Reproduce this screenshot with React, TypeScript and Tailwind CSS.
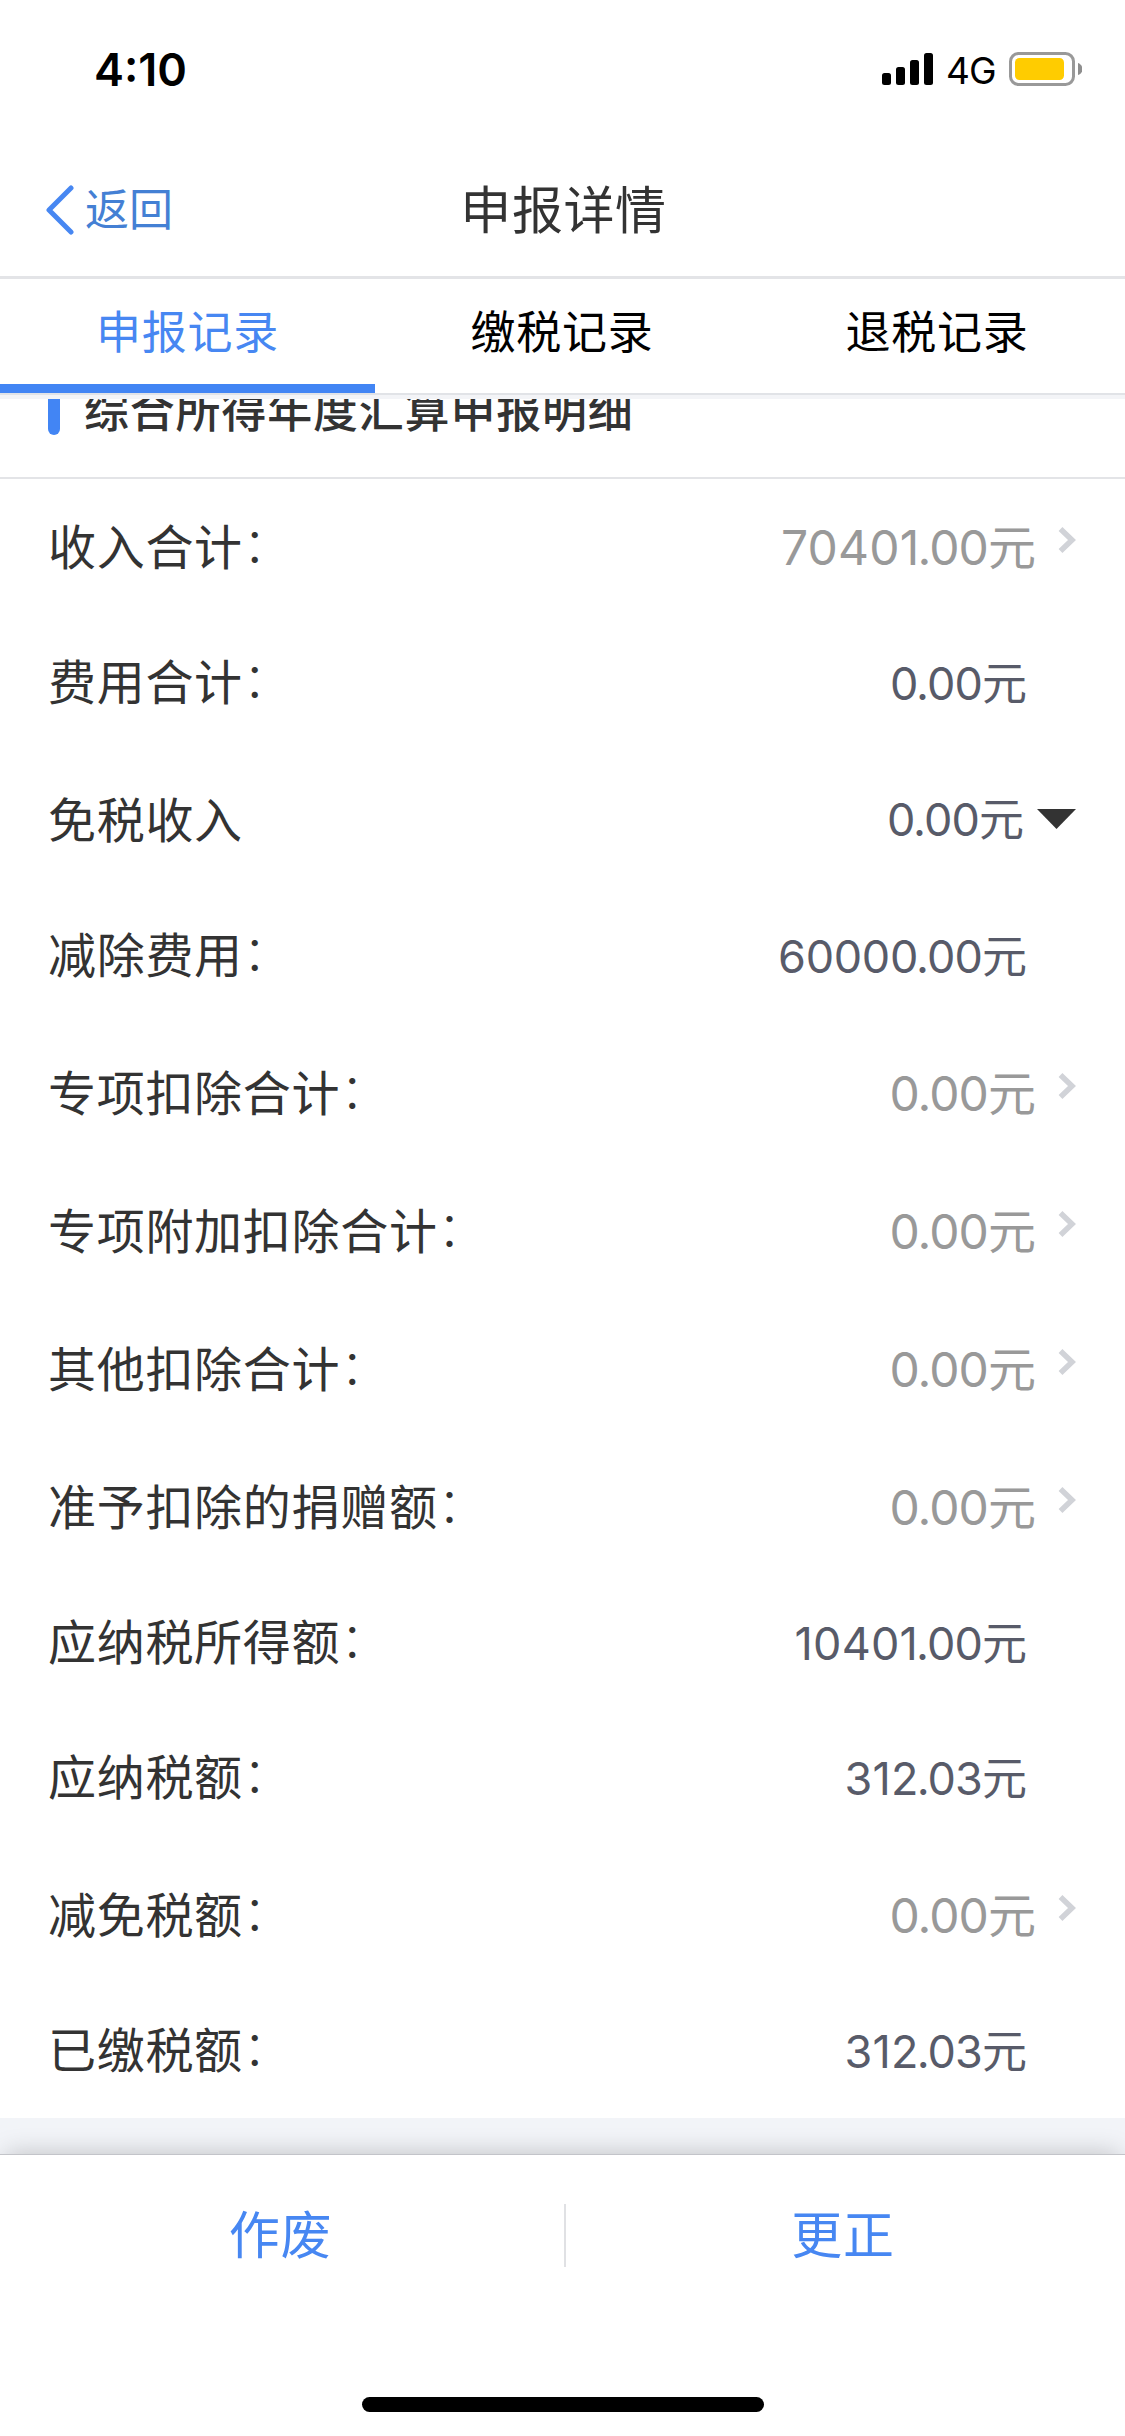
import { useState } from "react";

type Row = {
  label: string;
  colon?: boolean;
  value: string;
  kind: "link" | "plain" | "toggle";
};

const tabs = ["申报记录", "缴税记录", "退税记录"];

const rows: Row[] = [
  { label: "收入合计", colon: true, value: "70401.00", kind: "link" },
  { label: "费用合计", colon: true, value: "0.00", kind: "plain" },
  { label: "免税收入", value: "0.00", kind: "toggle" },
  { label: "减除费用", colon: true, value: "60000.00", kind: "plain" },
  { label: "专项扣除合计", colon: true, value: "0.00", kind: "link" },
  { label: "专项附加扣除合计", colon: true, value: "0.00", kind: "link" },
  { label: "其他扣除合计", colon: true, value: "0.00", kind: "link" },
  { label: "准予扣除的捐赠额", colon: true, value: "0.00", kind: "link" },
  { label: "应纳税所得额", colon: true, value: "10401.00", kind: "plain" },
  { label: "应纳税额", colon: true, value: "312.03", kind: "plain" },
  { label: "减免税额", colon: true, value: "0.00", kind: "link" },
  { label: "已缴税额", colon: true, value: "312.03", kind: "plain" },
];

function StatusBar() {
  return (
    <div className="flex h-[138px] items-center justify-between pl-[94px] pr-[43px]">
      <span className="text-[45px] leading-none font-semibold text-black">4:10</span>
      <div className="flex items-center">
        <svg width="52" height="34" viewBox="0 0 52 34">
          <rect x="0" y="21" width="9" height="12" rx="2.5" />
          <rect x="14" y="15" width="9" height="18" rx="2.5" />
          <rect x="28" y="8" width="9" height="25" rx="2.5" />
          <rect x="42" y="1" width="9" height="32" rx="2.5" />
        </svg>
        <span className="ml-[12px] w-[50px] pt-[2px] text-[37px] leading-none tracking-[-1px] text-black">4G</span>
        <svg className="ml-[13px]" width="73" height="34" viewBox="0 0 73 34">
          <rect x="1.5" y="1.5" width="63" height="31" rx="8" fill="none" stroke="#999" strokeWidth="3" />
          <rect x="6" y="6" width="49" height="22" rx="4.5" fill="#ffcc00" />
          <path d="M69 11c2.700 1 4.500 3.300 4.500 6s-1.800 5-4.500 6z" fill="#8e8e8e" />
        </svg>
      </div>
    </div>
  );
}

function NavBar() {
  return (
    <div className="grid h-[141px] grid-cols-3 items-center border-b-[3px] border-[#e3e4e7] pt-[6px]">
      <button className="flex items-center pl-[45px] text-[#4480d4]">
        <svg width="29" height="50" viewBox="0 0 29 50" fill="none">
          <path d="M26 3 4 25l22 22" stroke="#4787f2" strokeWidth="5" strokeLinecap="round" strokeLinejoin="round" />
        </svg>
        <span className="ml-[11px] text-[44px] leading-none">返回</span>
      </button>
      <h1 className="pl-[2px] text-center text-[51px] leading-none font-normal tracking-[0.6px] text-[#333]">
        申报详情
      </h1>
    </div>
  );
}

function Amount({ value }: { value: string }) {
  const [yuan, cents] = value.split(".");
  // the "1" glyph is narrow, so those amounts get a little more room
  const hasOne = yuan.includes("1");
  return (
    <span>
      <span className={hasOne ? "tracking-[0.2px]" : "tracking-[-0.3px]"}>{yuan}</span>
      <span className="-mx-[2px]">.</span>
      <span className="tracking-[-0.9px]">{cents}</span>元
    </span>
  );
}

function RowItem({ row }: { row: Row }) {
  return (
    <li
      className={
        row.kind === "plain"
          ? "flex h-[135px] items-center justify-between pl-12"
          : "flex h-[138px] items-center justify-between pl-12"
      }
    >
      <span
        className={
          row.kind === "plain"
            ? "flex items-center text-[48px] leading-none tracking-[0.7px] text-[#333]"
            : "flex items-center pt-[3px] text-[48px] leading-none tracking-[0.7px] text-[#333]"
        }
      >
        {row.label}
        {row.colon && <span className="-mt-[5px] font-light">：</span>}
      </span>
      {row.kind === "link" && (
        <span className="flex items-center pt-[3px] pr-[49px] text-[48px] leading-none text-[#999]">
          <Amount value={row.value} />
          <svg className="-mt-[15px] ml-[22px]" width="18" height="26" viewBox="0 0 18 26" fill="none">
            <path d="M2.500 2 14 13 2.500 24" stroke="#d1d3d8" strokeWidth="5.500" />
          </svg>
        </span>
      )}
      {row.kind === "plain" && (
        <span className="pt-px pr-[98px] text-[45px] leading-none text-[#585b69]">
          <Amount value={row.value} />
        </span>
      )}
      {row.kind === "toggle" && (
        <span className="flex items-center pr-[49px] text-[45px] leading-none text-[#585b69]">
          <Amount value={row.value} />
          <svg className="ml-[13px]" width="39" height="20" viewBox="0 0 39 20">
            <path d="M0 0h39L19.500 20z" fill="#333" />
          </svg>
        </span>
      )}
    </li>
  );
}

export default function App() {
  const [active, setActive] = useState(0);

  return (
    <div className="flex h-[2436px] w-[1125px] flex-col overflow-hidden bg-white font-['Inter','Noto_Sans_CJK_SC',sans-serif]">
      <StatusBar />
      <NavBar />

      <div className="grid h-[116px] grid-cols-3 border-b-[2px] border-[#e1e3e7]">
        {tabs.map((tab, i) => (
          <button
            key={tab}
            onClick={() => setActive(i)}
            className={
              i === active
                ? "border-b-[9px] border-[#4285f4] pt-px text-[45px] leading-none tracking-[0.7px] text-[#4787f2]"
                : "pr-px pb-[8px] text-[45px] leading-none tracking-[0.7px] text-black"
            }
          >
            {tab}
          </button>
        ))}
      </div>

      {/* scrolled list, heading is partly under the tabs */}
      <div className="flex h-[1759px] flex-col justify-end overflow-hidden border-t-[4px] border-[#f3f4f7] bg-[#f2f4f8]">
        <div className="bg-white">
          <div className="flex h-[130px] items-center border-b-[2px] border-[#e3e4e7] pb-1 pl-12">
            <span className="h-12 w-3 rounded-full bg-[#4285f4]" />
            <h2 className="ml-[24px] text-[45px] leading-none font-medium tracking-[0.8px] text-[#333]">
              综合所得年度汇算申报明细
            </h2>
          </div>
          <ul className="-mt-[2px]">
            {rows.map((row) => (
              <RowItem key={row.label} row={row} />
            ))}
          </ul>
        </div>
        <div className="h-9 shrink-0" />
      </div>

      <div className="relative flex flex-1 flex-col justify-between border-t border-[#c3c4c9] bg-white pb-6 shadow-[0_-6px_24px_-6px_rgba(0,0,0,0.22)]">
        <div className="flex h-[161px] items-center">
          <button className="w-[564px] pr-[3px] text-[51px] leading-none tracking-[0.8px] text-[#4787f2]">作废</button>
          <span className="h-[63px] w-[2px] bg-[#e0e1e4]" />
          <button className="flex-1 pr-[5px] text-[51px] leading-none tracking-[0.8px] text-[#4787f2]">更正</button>
        </div>
        <div className="h-[15px] w-[402px] self-center rounded-full bg-black" />
      </div>
    </div>
  );
}
